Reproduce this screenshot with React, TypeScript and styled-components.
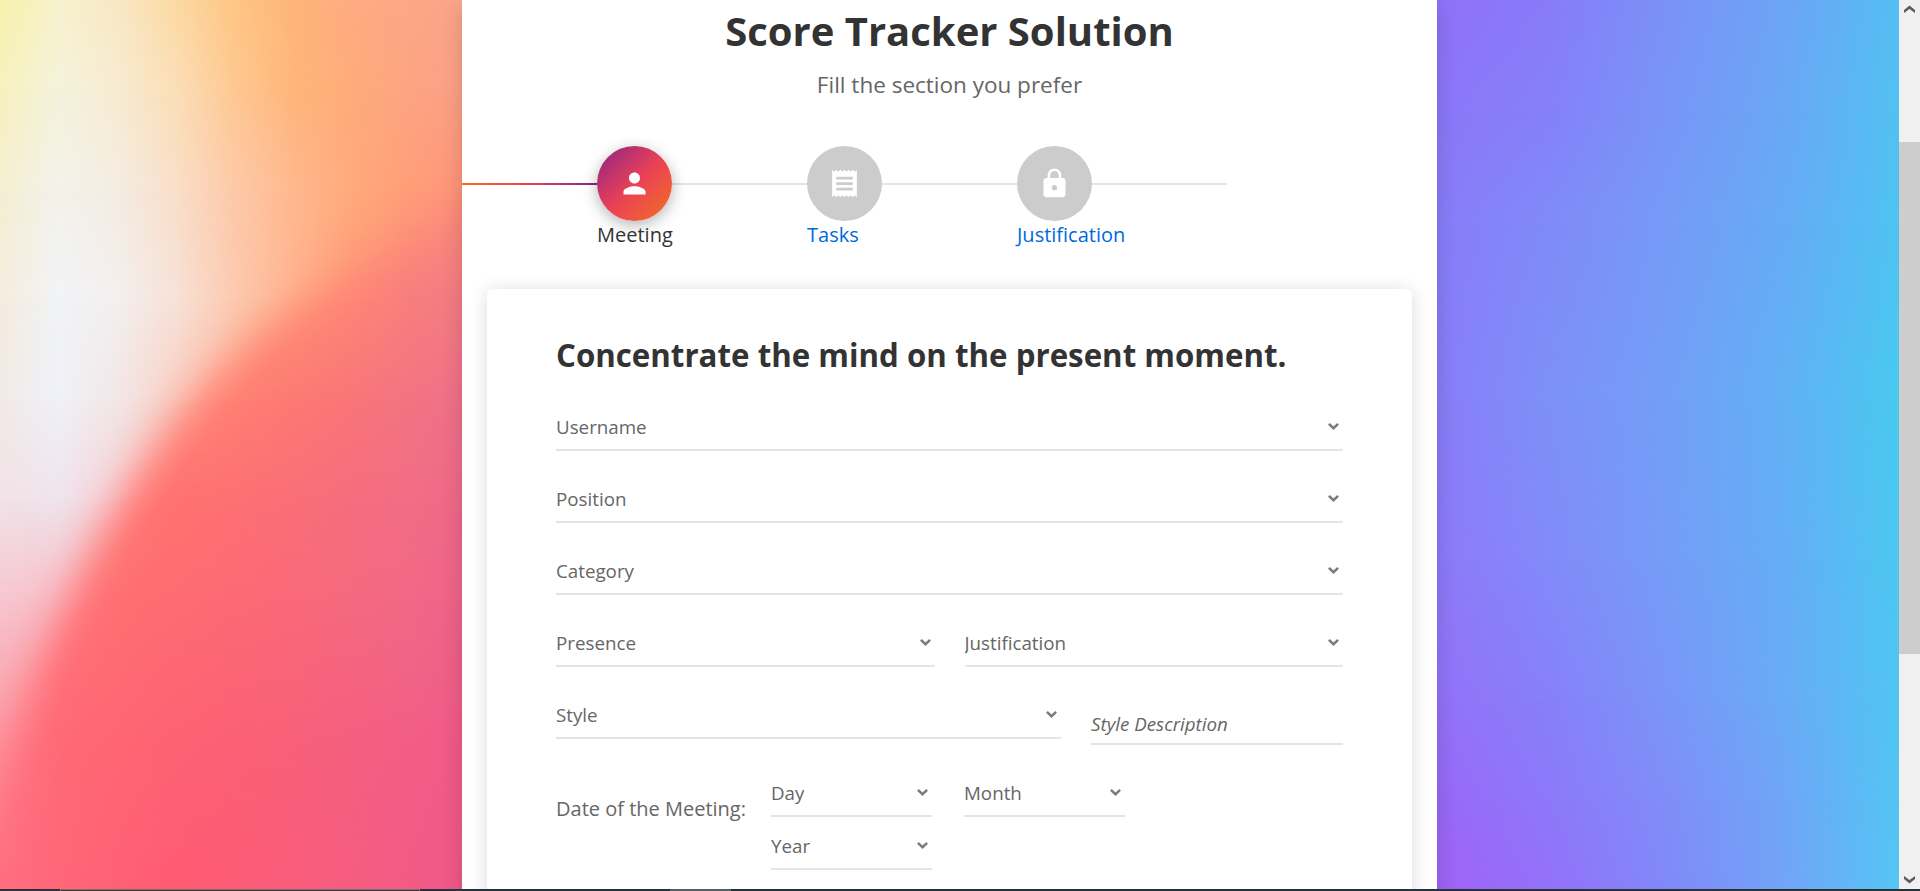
import React from "react";
import styled, { createGlobalStyle, css } from "styled-components";
import { MdLock, MdPerson, MdReceipt } from "react-icons/md";

const GlobalStyle = createGlobalStyle`
  * { box-sizing: border-box; }
  html, body { margin: 0; padding: 0; overflow: hidden; }
  body { font-family: "Open Sans", "Noto Sans", sans-serif; color: #666; }
  h1, h2, p { margin: 0; }
`;

/* ---------- wallpaper ---------- */

type MeshRow = { y: number; colors: string[] };

const Mesh = ({ id, x, width, rows }: { id: string; x: number; width: number; rows: MeshRow[] }) => (
  <g>
    <defs>
      {rows.map((row, i) => (
        <React.Fragment key={row.y}>
          <linearGradient id={`${id}-c${i}`} x1="0" x2="1" y1="0" y2="0">
            {row.colors.map((c, k) => (
              <stop key={k} offset={k / (row.colors.length - 1)} stopColor={c} />
            ))}
          </linearGradient>
          {i > 0 && (
            <>
              <linearGradient id={`${id}-f${i}`} gradientUnits="userSpaceOnUse" x1="0" x2="0" y1={rows[i - 1].y} y2={row.y}>
                <stop offset="0" stopColor="#fff" stopOpacity="0" />
                <stop offset="1" stopColor="#fff" />
              </linearGradient>
              <mask id={`${id}-m${i}`} maskUnits="userSpaceOnUse" x={x} y="0" width={width} height="889">
                <rect x={x} y={rows[i - 1].y} width={width} height="889" fill={`url(#${id}-f${i})`} />
              </mask>
            </>
          )}
        </React.Fragment>
      ))}
    </defs>
    {rows.map((row, i) => (
      <rect
        key={row.y}
        x={x}
        y="0"
        width={width}
        height="889"
        fill={`url(#${id}-c${i})`}
        mask={i > 0 ? `url(#${id}-m${i})` : undefined}
      />
    ))}
  </g>
);

const paleRows: MeshRow[] = [
  { y: 0, colors: ["#f7f2ac", "#f7f2cc", "#f9e8c4", "#fcd9a3", "#fec684", "#feb579", "#feab82", "#fca787", "#fba488"] },
  { y: 90, colors: ["#f6f1bd", "#f4f2dc", "#f7ebd2", "#fbdeb6", "#fec891", "#ffb57a", "#feab7a", "#fca482", "#fb9f87"] },
  { y: 190, colors: ["#f5eed2", "#f3f2ea", "#f4ece2", "#f9dec9", "#fdc9a8", "#ffb88e", "#ffa97c", "#ff9d78", "#fe937a"] },
  { y: 300, colors: ["#f4ecdd", "#f1f3f7", "#f3efee", "#f7e1d7", "#fcc9b0", "#ffb490", "#ff9c78", "#ff8e76", "#f8807a"] },
  { y: 400, colors: ["#f2e9e6", "#eff1f8", "#f2e6e6", "#f9d0c4", "#ffb9a4", "#ff9a80", "#ff8874", "#fa7a7a", "#f07388"] },
  { y: 500, colors: ["#f1e2e7", "#efe3ec", "#f6d2d6", "#fdb8b0", "#ff8c80", "#fd7478", "#f57080", "#f26d86", "#ee6c8a"] },
  { y: 600, colors: ["#f7c6d0", "#f8bfc8", "#fdb0b2", "#ff8080", "#fd6c72", "#fb6a74", "#f5687e", "#f26784", "#ee668a"] },
  { y: 740, colors: ["#fb9aa4", "#ff8a92", "#ff6a72", "#fe6472", "#fb6074", "#f75f7a", "#f46080", "#f25e86", "#f05a8a"] },
  { y: 889, colors: ["#ff7484", "#ff6878", "#ff6074", "#ff5c74", "#fd5c76", "#fa5c7c", "#f65c82", "#f25a86", "#f05a8a"] },
];

const coralRows: MeshRow[] = [
  { y: 180, colors: ["#ffa47c", "#ffa47c", "#ffa27a", "#ffa07a", "#ffa07a", "#ff9e76", "#ff9a76", "#fe9478", "#fb8c7a"] },
  { y: 290, colors: ["#ff987c", "#ff987c", "#ff967a", "#ff957a", "#ff9478", "#ff8f75", "#ff8776", "#f87f7d", "#f37c83"] },
  { y: 400, colors: ["#ff8478", "#ff8478", "#ff8476", "#ff8274", "#ff7e73", "#fd7973", "#f97578", "#f37382", "#ee6f8b"] },
  { y: 500, colors: ["#ff7a78", "#ff7876", "#ff7672", "#ff7270", "#fd7073", "#fa6e77", "#f56d7e", "#f26d85", "#ee6889"] },
  { y: 600, colors: ["#ff7c80", "#ff7276", "#ff6f72", "#fe6c72", "#fc6a74", "#f96979", "#f5697f", "#f16886", "#ee628a"] },
  { y: 740, colors: ["#ff7684", "#ff6a76", "#ff6673", "#fd6273", "#fb6075", "#f86079", "#f45f7f", "#f25e86", "#f05988"] },
  { y: 889, colors: ["#ff6e80", "#ff6678", "#ff6075", "#ff5b73", "#fd5b76", "#fa5c7b", "#f65c80", "#f25a86", "#f05888"] },
];

const violetRows: MeshRow[] = [
  { y: 0, colors: ["#9170f7", "#887bf9", "#7b91f7", "#6da4f6", "#55bef2"] },
  { y: 110, colors: ["#8d76f8", "#8580f9", "#7895f7", "#6aa7f5", "#52c1f2"] },
  { y: 223, colors: ["#887cf8", "#808af8", "#769af7", "#66abf5", "#4fc3f2"] },
  { y: 400, colors: ["#8a7cf8", "#7d90f8", "#739ef7", "#62b0f5", "#48c9ef"] },
  { y: 560, colors: ["#8f78f8", "#828af9", "#759cf7", "#65adf6", "#4cc7f1"] },
  { y: 700, colors: ["#9471f8", "#877ff9", "#7a95f8", "#69abf6", "#50c5f2"] },
  { y: 800, colors: ["#9a67f8", "#8d78f9", "#808df8", "#6fa5f7", "#53c5f3"] },
  { y: 889, colors: ["#a261f7", "#9470f9", "#8188f8", "#72a3f7", "#56c5f4"] },
];

const WallpaperArt = styled.svg`
  position: absolute;
  inset: 0;
  width: 1899px;
  height: 889px;
`;

const Wallpaper = () => (
  <WallpaperArt viewBox="0 0 1899 889" aria-hidden="true">
    <defs>
      <filter id="soften" filterUnits="userSpaceOnUse" x="-200" y="0" width="1000" height="1200">
        <feGaussianBlur stdDeviation="20" />
      </filter>
      <mask id="hill" maskUnits="userSpaceOnUse" x="0" y="0" width="470" height="889">
        <path
          d="M-60 1010 L-28 880 C0 760 38 660 80 577 C118 502 165 425 228 362 C290 302 380 245 470 205 L700 130 L700 1100 L-60 1100 Z"
          fill="#fff"
          filter="url(#soften)"
        />
      </mask>
    </defs>
    <Mesh id="pale" x={0} width={470} rows={paleRows} />
    <g mask="url(#hill)">
      <Mesh id="coral" x={0} width={470} rows={coralRows} />
    </g>
    <Mesh id="violet" x={1430} width={469} rows={violetRows} />
  </WallpaperArt>
);

/* ---------- window frame ---------- */

const Screen = styled.div`
  display: flex;
  flex-direction: column;
  width: 1920px;
  height: 891px;
  overflow: hidden;
`;

const Viewport = styled.div`
  display: flex;
  height: 889px;
`;

const Page = styled.main`
  position: relative;
  display: flex;
  justify-content: center;
  width: 1899px;
  height: 889px;
  overflow: hidden;
`;

const Scrollbar = styled.div`
  display: flex;
  flex-direction: column;
  align-items: center;
  width: 21px;
  padding: 5px 0 5px;
  background: #f0f0f0;
`;

const ScrollThumb = styled.div`
  width: 21px;
  height: 512px;
  margin: 128px 0 auto;
  background: #cdcdcd;
`;

const Taskbar = styled.div`
  display: flex;
  height: 2px;
  background: #26323a;
`;

const TaskbarItem = styled.div<{ $gap: number; $width: number; $outlined?: boolean }>`
  width: ${(p) => p.$width}px;
  margin-left: ${(p) => p.$gap}px;
  background: ${(p) => (p.$outlined ? "#3a3738" : "#566064")};
  ${(p) =>
    p.$outlined &&
    css`
      border: solid #77706d;
      border-width: 1px 1px 0;
    `}
`;

/* ---------- wizard ---------- */

const Panel = styled.section`
  position: relative;
  width: 975px;
  height: 1200px;
  flex: none;
  background: #fff;
  box-shadow: 0 8px 20px rgba(0, 0, 0, 0.15);
`;

const Title = styled.h1`
  padding-top: 4px;
  text-align: center;
  font-size: 40px;
  line-height: 54px;
  font-weight: 700;
  color: #333;
`;

const Subtitle = styled.p`
  margin-top: 11px;
  text-align: center;
  font-size: 22.5px;
  line-height: 32px;
`;

const Steps = styled.nav`
  display: flex;
  margin-top: 45px;
`;

const Rail = styled.div<{ $done?: boolean }>`
  width: 135px;
  height: 2px;
  margin-top: 37px;
  background: ${(p) => (p.$done ? "linear-gradient(90deg, #f27121, #e94057 50%, #8a2387)" : "#e5e5e5")};
`;

const Step = styled.div`
  width: 210px;
`;

const StepTrack = styled.div`
  display: flex;
`;

const StepBadge = styled.div<{ $active?: boolean }>`
  position: relative;
  display: flex;
  align-items: center;
  justify-content: center;
  width: 75px;
  height: 75px;
  border-radius: 50%;
  color: #fff;
  font-size: 33px;
  background: ${(p) => (p.$active ? "linear-gradient(135deg, #8a2387, #e94057 50%, #f27121)" : "#ccc")};
  box-shadow: ${(p) => (p.$active ? "0 4px 15px rgba(0, 0, 0, 0.3)" : "none")};
`;

const StepLabel = styled.div<{ $active?: boolean }>`
  position: relative;
  font-size: 20px;
  line-height: 27px;
  color: ${(p) => (p.$active ? "#333" : "#0069d9")};
`;

const Card = styled.div`
  margin: 41px 25px 0;
  padding: 46px 69px 0;
  height: 800px;
  border-radius: 6px;
  background: #fff;
  box-shadow: 0 2px 18px rgba(0, 0, 0, 0.15);
`;

const CardTitle = styled.h2`
  margin-bottom: 29px;
  font-size: 31.25px;
  line-height: 40px;
  font-weight: 700;
  color: #333;
  white-space: nowrap;
`;

const Form = styled.div`
  display: flex;
  flex-direction: column;
  gap: 25px;
`;

const Row = styled.div<{ $columns: string }>`
  display: grid;
  grid-template-columns: ${(p) => p.$columns};
  column-gap: 30px;
  align-items: start;
`;

const SelectBox = styled.div`
  display: flex;
  align-items: center;
  justify-content: space-between;
  height: 47px;
  padding-right: 3px;
  border-bottom: 2px solid #e5e5e5;
  font-size: 18.75px;
  line-height: 25px;
  overflow: hidden;
`;

const SelectText = styled.span`
  overflow: hidden;
`;

const SelectArrow = styled.svg`
  width: 13px;
  height: 9px;
  flex: none;
`;

const TextField = styled.div`
  height: 53px;
  padding-top: 19px;
  border-bottom: 2px solid #e5e5e5;
  font-size: 18.75px;
  line-height: 25px;
  font-style: italic;
`;

const DateRow = styled.div`
  display: flex;
  align-items: flex-start;
`;

const DateLabel = styled.span`
  width: 215px;
  padding-top: 25px;
  font-size: 20px;
  line-height: 27px;
`;

const DateParts = styled.div`
  display: grid;
  grid-template-columns: 161px 161px;
  column-gap: 32px;
  row-gap: 6px;
`;

const Select = ({ label }: { label: string }) => (
  <SelectBox>
    <SelectText>{label}</SelectText>
    <SelectArrow viewBox="0 0 13 9">
      <path d="M1.9 1.8 L6.5 6.2 L11.1 1.8" fill="none" stroke="#7c7c7c" strokeWidth="2.5" />
    </SelectArrow>
  </SelectBox>
);

const ScrollArrow = ({ down }: { down?: boolean }) => (
  <svg width="11" height="9" viewBox="0 0 11 9">
    <path d={down ? "M0 1 L5.5 5 L11 1 V4 L5.5 8.4 L0 4 Z" : "M0 8 L5.5 4 L11 8 V5 L5.5 0.6 L0 5 Z"} fill="#5c5c5c" />
  </svg>
);

const steps = [
  { label: "Meeting", icon: <MdPerson />, active: true },
  { label: "Tasks", icon: <MdReceipt />, active: false },
  { label: "Justification", icon: <MdLock />, active: false },
];

export default function App() {
  return (
    <Screen>
      <GlobalStyle />
      <Viewport>
        <Page>
          <Wallpaper />
          <Panel>
            <Title>Score Tracker Solution</Title>
            <Subtitle>Fill the section you prefer</Subtitle>
            <Steps>
              <Rail $done />
              {steps.map((s) => (
                <Step key={s.label}>
                  <StepTrack>
                    <StepBadge $active={s.active}>{s.icon}</StepBadge>
                    <Rail />
                  </StepTrack>
                  <StepLabel $active={s.active}>{s.label}</StepLabel>
                </Step>
              ))}
            </Steps>
            <Card>
              <CardTitle>Concentrate the mind on the present moment.</CardTitle>
              <Form>
                <Select label="Username" />
                <Select label="Position" />
                <Select label="Category" />
                <Row $columns="1fr 1fr">
                  <Select label="Presence" />
                  <Select label="Justification" />
                </Row>
                <Row $columns="505px 1fr">
                  <Select label="Style" />
                  <TextField>Style Description</TextField>
                </Row>
                <DateRow>
                  <DateLabel>Date of the Meeting:</DateLabel>
                  <DateParts>
                    <Select label="Day" />
                    <Select label="Month" />
                    <Select label="Year" />
                  </DateParts>
                </DateRow>
              </Form>
            </Card>
          </Panel>
        </Page>
        <Scrollbar>
          <ScrollArrow />
          <ScrollThumb />
          <ScrollArrow down />
        </Scrollbar>
      </Viewport>
      <Taskbar>
        <TaskbarItem $gap={60} $width={360} $outlined />
        <TaskbarItem $gap={250} $width={61} />
      </Taskbar>
    </Screen>
  );
}
